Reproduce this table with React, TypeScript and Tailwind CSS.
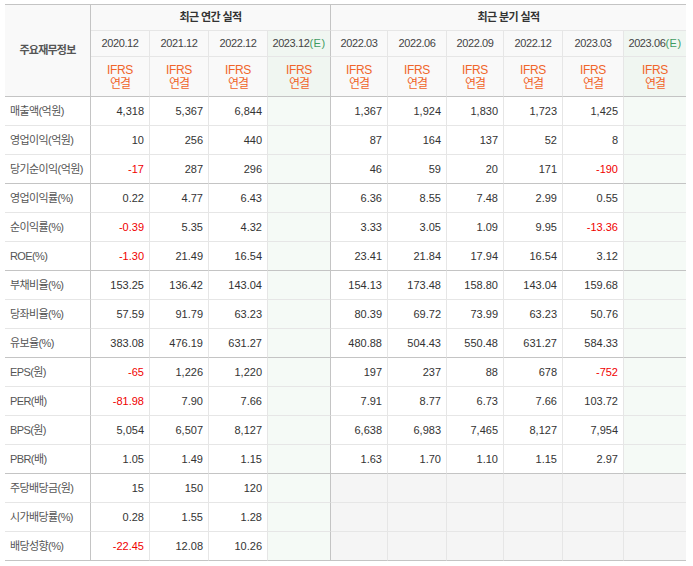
import React from 'react';

type Row = { label: string; annual: string[]; quarter: string[]; groupEnd?: boolean; dividend?: boolean };

const rows: Row[] = [
  { label: '매출액(억원)', annual: ['4,318', '5,367', '6,844'], quarter: ['1,367', '1,924', '1,830', '1,723', '1,425'] },
  { label: '영업이익(억원)', annual: ['10', '256', '440'], quarter: ['87', '164', '137', '52', '8'] },
  { label: '당기순이익(억원)', annual: ['-17', '287', '296'], quarter: ['46', '59', '20', '171', '-190'], groupEnd: true },
  { label: '영업이익률(%)', annual: ['0.22', '4.77', '6.43'], quarter: ['6.36', '8.55', '7.48', '2.99', '0.55'] },
  { label: '순이익률(%)', annual: ['-0.39', '5.35', '4.32'], quarter: ['3.33', '3.05', '1.09', '9.95', '-13.36'] },
  { label: 'ROE(%)', annual: ['-1.30', '21.49', '16.54'], quarter: ['23.41', '21.84', '17.94', '16.54', '3.12'], groupEnd: true },
  { label: '부채비율(%)', annual: ['153.25', '136.42', '143.04'], quarter: ['154.13', '173.48', '158.80', '143.04', '159.68'] },
  { label: '당좌비율(%)', annual: ['57.59', '91.79', '63.23'], quarter: ['80.39', '69.72', '73.99', '63.23', '50.76'] },
  { label: '유보율(%)', annual: ['383.08', '476.19', '631.27'], quarter: ['480.88', '504.43', '550.48', '631.27', '584.33'], groupEnd: true },
  { label: 'EPS(원)', annual: ['-65', '1,226', '1,220'], quarter: ['197', '237', '88', '678', '-752'] },
  { label: 'PER(배)', annual: ['-81.98', '7.90', '7.66'], quarter: ['7.91', '8.77', '6.73', '7.66', '103.72'] },
  { label: 'BPS(원)', annual: ['5,054', '6,507', '8,127'], quarter: ['6,638', '6,983', '7,465', '8,127', '7,954'] },
  { label: 'PBR(배)', annual: ['1.05', '1.49', '1.15'], quarter: ['1.63', '1.70', '1.10', '1.15', '2.97'], groupEnd: true },
  { label: '주당배당금(원)', annual: ['15', '150', '120'], quarter: ['', '', '', '', ''], dividend: true },
  { label: '시가배당률(%)', annual: ['0.28', '1.55', '1.28'], quarter: ['', '', '', '', ''], dividend: true },
  { label: '배당성향(%)', annual: ['-22.45', '12.08', '10.26'], quarter: ['', '', '', '', ''], dividend: true, groupEnd: true },
];

const annualDates = ['2020.12', '2021.12', '2022.12'];
const quarterDates = ['2022.03', '2022.06', '2022.09', '2022.12', '2023.03'];

// column index -> right border (0 = label col, 4 = annual estimate col, 10 = last col)
function rightBorder(ci: number) {
  if (ci === 10) return '';
  if (ci === 0 || ci === 4) return 'border-r border-r-[#c4c4c4]';
  return 'border-r border-r-[#e6e6e6]';
}

function IfrsCell({ ci }: { ci: number }) {
  const bg = ci === 4 || ci === 10 ? 'bg-[#f0f6f1]' : 'bg-[#f9f9f9]';
  return (
    <div className={`flex flex-col items-center justify-center border-b border-b-[#c4c4c4] text-[12px] leading-[14px] text-[#f0652a] ${bg} ${rightBorder(ci)}`}>
      <span className="tracking-[-0.3px]">IFRS</span>
      <span className="text-[12px] tracking-[-1px]">연결</span>
    </div>
  );
}

function DateCell({ ci, date, estimate }: { ci: number; date: string; estimate?: boolean }) {
  const bg = estimate ? 'bg-[#f0f6f1]' : 'bg-[#f9f9f9]';
  return (
    <div className={`flex items-center justify-center border-b border-b-[#e6e6e6] text-[11px] tracking-[-0.4px] text-[#444] ${bg} ${rightBorder(ci)}`}>
      {date}
      {estimate && <span className="text-[#3f9c61] tracking-[0.5px]">(E)</span>}
    </div>
  );
}

function DataRow({ row }: { row: Row }) {
  const bottom = row.groupEnd ? 'border-b border-b-[#c4c4c4]' : 'border-b border-b-[#e6e6e6]';
  const values = [...row.annual, '', ...row.quarter, ''];
  return (
    <>
      <div className={`flex items-center pl-[5px] text-[11px] tracking-[-0.6px] text-[#555] bg-white ${bottom} ${rightBorder(0)}`}>
        {row.label}
      </div>
      {values.map((v, i) => {
        const ci = i + 1;
        let bg = 'bg-white';
        if (row.dividend && ci >= 5) bg = 'bg-[#f5f5f5]';
        else if (ci === 4 || ci === 10) bg = 'bg-[#f5faf6]';
        const color = v.startsWith('-') ? 'text-[#f00000]' : 'text-[#333]';
        return (
          <div key={ci} className={`flex items-center justify-end pr-[5px] text-[11px] ${color} ${bg} ${bottom} ${rightBorder(ci)}`}>
            {v}
          </div>
        );
      })}
    </>
  );
}

export default function App() {
  return (
    <div className="w-[693px] h-[566px] overflow-hidden bg-white pt-[4px] pl-[5px] font-['Liberation_Sans','Noto_Sans_CJK_KR',sans-serif]">
      <div className="grid w-[681px] grid-cols-[86px_59px_59px_59px_63px_57px_59px_57px_59px_61px_62px] grid-rows-[26px_26px_40px_repeat(16,29px)] border-t border-t-[#c4c4c4]">
        {/* header */}
        <div className="row-span-3 flex items-center justify-center bg-[#f9f9f9] border-b border-b-[#c4c4c4] border-r border-r-[#c4c4c4] text-[11px] font-bold tracking-[-0.8px] text-[#555]">
          주요재무정보
        </div>
        <div className="col-span-4 flex items-center justify-center bg-[#f9f9f9] border-b border-b-[#e6e6e6] border-r border-r-[#c4c4c4] text-[11px] font-bold tracking-[-0.6px] text-[#333]">
          최근 연간 실적
        </div>
        <div className="col-span-6 flex items-center justify-center bg-[#f9f9f9] border-b border-b-[#e6e6e6] text-[11px] font-bold tracking-[-0.6px] text-[#333]">
          최근 분기 실적
        </div>

        {annualDates.map((d, i) => (
          <DateCell key={d} ci={i + 1} date={d} />
        ))}
        <DateCell ci={4} date="2023.12" estimate />
        {quarterDates.map((d, i) => (
          <DateCell key={d + 'q'} ci={i + 5} date={d} />
        ))}
        <DateCell ci={10} date="2023.06" estimate />

        {[1, 2, 3, 4, 5, 6, 7, 8, 9, 10].map((ci) => (
          <IfrsCell key={ci} ci={ci} />
        ))}

        {rows.map((r) => (
          <DataRow key={r.label} row={r} />
        ))}
      </div>
    </div>
  );
}
